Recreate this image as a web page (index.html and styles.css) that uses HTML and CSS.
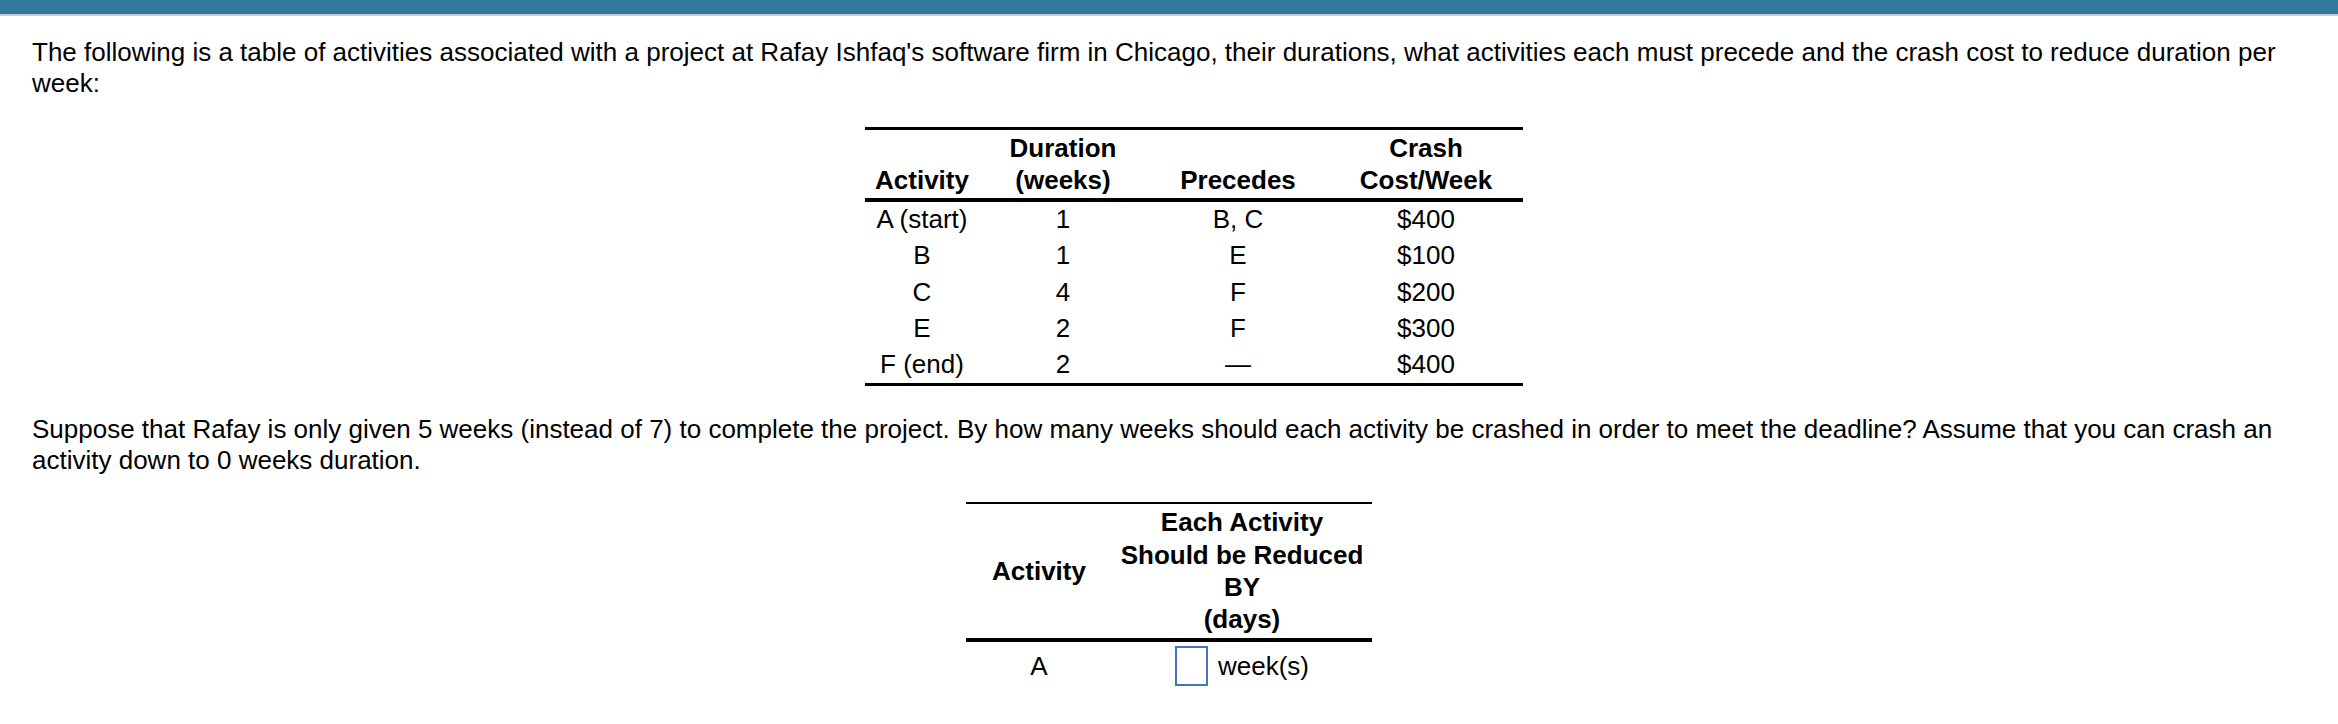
FILE: index.html
```html
<!DOCTYPE html>
<html lang="en">
<head>
<meta charset="utf-8">
<title>Project crashing</title>
<link rel="stylesheet" href="styles.css">
</head>
<body>
<div class="topbar"></div>
<main class="content">
  <p class="para">The following is a table of activities associated with a project at Rafay Ishfaq's software firm in Chicago, their durations, what activities each must precede and the crash cost to reduce duration per week:</p>
  <table class="act-table">
    <colgroup>
      <col class="ac1"><col class="ac2"><col class="ac3"><col class="ac4">
    </colgroup>
    <thead>
      <tr><th>Activity</th><th>Duration<br>(weeks)</th><th>Precedes</th><th>Crash<br>Cost/Week</th></tr>
    </thead>
    <tbody>
      <tr><td>A (start)</td><td>1</td><td>B, C</td><td>$400</td></tr>
      <tr><td>B</td><td>1</td><td>E</td><td>$100</td></tr>
      <tr><td>C</td><td>4</td><td>F</td><td>$200</td></tr>
      <tr><td>E</td><td>2</td><td>F</td><td>$300</td></tr>
      <tr><td>F (end)</td><td>2</td><td>—</td><td>$400</td></tr>
    </tbody>
  </table>
  <p class="para para-gap">Suppose that Rafay is only given 5 weeks (instead of 7) to complete the project. By how many weeks should each activity be crashed in order to meet the deadline? Assume that you can crash an activity down to 0 weeks duration.</p>
  <table class="ans-table">
    <colgroup>
      <col class="bc1"><col class="bc2">
    </colgroup>
    <thead>
      <tr><th>Activity</th><th>Each Activity<br>Should be Reduced<br>BY<br>(days)</th></tr>
    </thead>
    <tbody>
      <tr><td>A</td><td><span class="answer"><input class="answer-box" type="text" aria-label="Activity A reduction"><span class="unit">week(s)</span></span></td></tr>
    </tbody>
  </table>
</main>
</body>
</html>
```

FILE: styles.css
```css
html, body {
  margin: 0;
  padding: 0;
  background: #ffffff;
}

body {
  font-family: "Liberation Sans", Arial, Helvetica, sans-serif;
  color: #000000;
  font-size: 26px;
}

.topbar {
  height: 14px;
  background: #33799b;
  border-bottom: 2px solid #c7cbdd;
}

.content {
  padding: 21px 32px 0 32px;
}

.para {
  margin: 0;
  line-height: 31px;
}

.para-gap {
  margin-top: 28px;
}

/* activities table */
.act-table {
  border-collapse: collapse;
  table-layout: fixed;
  width: 658px;
  margin: 28px 0 0 833px;
}

.ac1 { width: 114px; }
.ac2 { width: 168px; }
.ac3 { width: 182px; }
.ac4 { width: 194px; }

.act-table th {
  font-weight: bold;
  line-height: 32px;
  padding: 2px 0 2px;
  vertical-align: bottom;
  text-align: center;
  border-top: 3px solid #000;
  border-bottom: 4px solid #000;
}

.act-table td {
  padding: 0;
  height: 36.3px;
  line-height: 34px;
  text-align: center;
  vertical-align: top;
}

.act-table tbody tr:last-child td {
  border-bottom: 3px solid #000;
}

/* answer table */
.ans-table {
  border-collapse: collapse;
  table-layout: fixed;
  width: 406px;
  margin: 26px auto 0;
}

.bc1 { width: 146px; }
.bc2 { width: 260px; }

.ans-table th {
  font-weight: bold;
  line-height: 32.2px;
  padding: 2px 0 3px;
  vertical-align: middle;
  text-align: center;
  border-top: 2px solid #000;
  border-bottom: 4px solid #000;
}

.ans-table td {
  padding: 4px 0;
  text-align: center;
  vertical-align: middle;
}

.answer {
  display: inline-flex;
  align-items: center;
  gap: 10px;
}

.answer-box {
  box-sizing: border-box;
  width: 33px;
  height: 40px;
  margin: 0;
  padding: 0;
  border: 2px solid #4472c4;
  border-radius: 0;
  background: #fff;
  font: inherit;
}

.unit {
  line-height: 32px;
}
```
